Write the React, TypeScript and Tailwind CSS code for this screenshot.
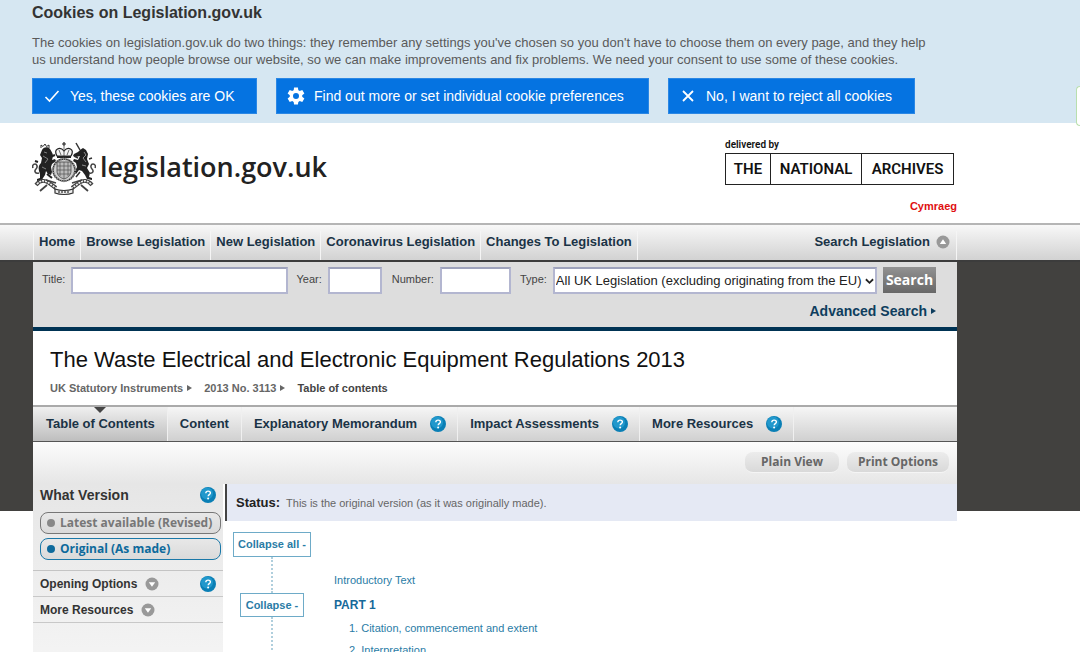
import React from 'react';

const NAV_ITEMS = [
  'Home',
  'Browse Legislation',
  'New Legislation',
  'Coronavirus Legislation',
  'Changes To Legislation',
];

const TABS = [
  { label: 'Table of Contents', active: true, help: false },
  { label: 'Content', active: false, help: false },
  { label: 'Explanatory Memorandum', active: false, help: true },
  { label: 'Impact Assessments', active: false, help: true },
  { label: 'More Resources', active: false, help: true },
];

const PROVISIONS = ['1. Citation, commencement and extent', '2. Interpretation'];

const HelpIcon = ({ topic }: { topic: string }) => (
  <button type="button" aria-label={`Help about ${topic}`} className="shrink-0">
    <svg width="16" height="16" viewBox="0 0 16 16" fill="none">
      <circle cx="8" cy="8" r="8" fill="#0a7fb5" />
      <circle cx="7" cy="6.5" r="6" fill="#2ba3d6" opacity="0.7" />
      <path d="M5.8 6.2c.1-1.4 1-2.1 2.3-2.1 1.300 0 2.300.7 2.300 1.900 0 1.600-2.200 1.700-2.200 3.300" stroke="#fff" strokeWidth="1.400" />
      <circle cx="8.100" cy="11.600" r="1" fill="#fff" />
    </svg>
  </button>
);

const RoundArrow = ({ up }: { up?: boolean }) => (
  <svg width="14" height="14" viewBox="0 0 14 14" className="shrink-0">
    <circle cx="7" cy="7" r="6.5" fill="#999" />
    <path d={up ? 'M3.800 9 7 4.200 10.200 9Z' : 'M3.800 5.200h6.400L7 9.800Z'} fill="#fff" />
  </svg>
);

const SmallArrow = () => (
  <svg width="5" height="6" viewBox="0 0 5 6" className="shrink-0" fill="currentColor">
    <path d="M0 0 5 3 0 6Z" />
  </svg>
);

const Lion = () => (
  <g>
    <path
      d="M10 8c1-3 6-4 8-1 1 2 3 4 3 7l-1 4 3-1 1 2-4 3-1 3 1 5-1 3-3-1-2-3-1 4-2 3-1 2-5 1v-2l3-1v-4l-1-3c-1-4 0-6 2-8l1-5-2-3Z"
      fill="#222"
    />
    <path d="M9 6V3l2 1.500L13 2l1.500 2.500L17 3v3" stroke="#333" strokeWidth="1" fill="none" />
    <path d="M18 15l5-2M6 20l-3-1M15 32l5 4" stroke="#222" strokeWidth="2" fill="none" />
    <path d="M7 31c-4 1-5-2-3-4s1-5-1-5-3 2-2 4" stroke="#444" strokeWidth="1.600" fill="none" />
    <path d="m12 10 3 1M11 14l5 3-3 4M10 25l4 2" stroke="#999" strokeWidth=".8" fill="none" />
  </g>
);

const Unicorn = () => (
  <g>
    <path
      d="M48 8l3-2 3 2 2 4-1 5 2 5-2 4 3 5-1 4 3 1v2l-5-1-2-4-3-4-3-1-3 4-2-1 3-6-1-4-3-2 1-2 4 1 2-4-4 1-3-1 1-2 4-2Z"
      fill="#222"
    />
    <path d="m48 8-4-7M46 16l-4-2M57 17l3-1M48 30l-4 5" stroke="#333" strokeWidth="1.500" fill="none" />
    <path d="M57 31c4 1 5-2 3-4s-1-5 1-5 3 2 2 4" stroke="#444" strokeWidth="1.500" fill="none" />
    <path d="m52 10 2 3-3 3 3 4M50 23l4 1" stroke="#aaa" strokeWidth=".8" fill="none" />
  </g>
);

const Crest = () => (
  <svg width="64" height="54" viewBox="0 0 64 54" fill="none" aria-hidden="true">
    <Lion />
    <Unicorn />
    <path d="M32 0v4M30 2h4" stroke="#222" strokeWidth="1.200" />
    <path d="M25 14c-4-7 3-10 7-5 4-5 11-2 7 5Z" fill="#f4f4f4" stroke="#222" strokeWidth="1.200" />
    <path d="M32 4v10M27 8l2 5M37 8l-2 5" stroke="#444" strokeWidth=".8" />
    <path d="M25 15h14" stroke="#222" strokeWidth="2" />
    <circle cx="32" cy="28" r="11" fill="#d0d0d0" stroke="#333" strokeWidth="1.400" />
    <circle cx="32" cy="28" r="11" stroke="#999" strokeWidth="2.500" strokeDasharray="1 1.400" />
    <path d="M25 20h14v9c0 5-4 7-7 8-3-1-7-3-7-8Z" fill="#bbb" stroke="#444" strokeWidth=".8" />
    <path d="M32 20v17M25 28h14M28 20v14M36 20v14M25 24h14M26 32h12" stroke="#555" strokeWidth=".7" />
    <path d="M4 43c4-5 9-5 13-2l7 5M60 43c-4-5-9-5-13-2l-7 5" stroke="#444" strokeWidth="4" />
    <path d="M5 42c4-4 8-4 12-1l7 5M59 42c-4-4-8-4-12-1l-7 5" stroke="#eee" strokeWidth="1.800" strokeDasharray="2 1" />
    <path d="M8 49l7-6M56 49l-7-6M14 38l10 3M50 38l-10 3" stroke="#444" strokeWidth="1.800" />
    <path d="M23 47c5 2 13 2 18 0v4c-5 2-13 2-18 0Z" fill="#eee" stroke="#333" strokeWidth="1.200" />
    <path d="M26 50h12" stroke="#555" strokeWidth="1.400" strokeDasharray="2 1" />
  </svg>
);

const CheckIcon = () => (
  <svg width="16" height="14" viewBox="0 0 16 14" fill="none" stroke="#fff" strokeWidth="1.600">
    <path d="m1.500 8 4 4L14.500 2" />
  </svg>
);

const GearIcon = () => (
  <svg width="20" height="20" viewBox="0 0 24 24" fill="#fff">
    <path d="M19.430 12.980c.04-.32.07-.64.07-.98s-.03-.66-.07-.98l2.600-1.990-2.500-4.330-3.060 1.230c-.52-.4-1.080-.73-1.690-.98L14.320 1.700H9.680l-.46 3.250c-.61.250-1.170.59-1.690.98L4.470 4.700l-2.500 4.330 2.600 1.990c-.04.32-.07.65-.07.98s.03.66.07.98l-2.600 1.990 2.500 4.330 3.060-1.230c.52.4 1.080.73 1.690.98l.46 3.250h4.640l.46-3.250c.61-.25 1.170-.59 1.690-.98l3.060 1.230 2.500-4.330zM12 15.600a3.600 3.600 0 1 1 0-7.200 3.600 3.600 0 0 1 0 7.200z" />
  </svg>
);

const CrossIcon = () => (
  <svg width="12" height="12" viewBox="0 0 12 12" stroke="#fff" strokeWidth="1.800">
    <path d="m1 1 10 10M11 1 1 11" />
  </svg>
);

const CookieBanner = () => {
  const button = 'flex h-9 items-center bg-[#0573e1] border border-[#2b87e4] text-sm text-white';

  return (
    <section className="relative h-[123px] bg-[#d6e7f2] pl-8 pt-1">
      <h2 className="text-base leading-[18px] font-bold text-[#333]">Cookies on Legislation.gov.uk</h2>
      <p className="mt-3 max-w-[904px] text-[13px] leading-[17px] text-[#5a5a5a]">
        The cookies on legislation.gov.uk do two things: they remember any settings you've chosen so you don't have to
        choose them on every page, and they help us understand how people browse our website, so we can make
        improvements and fix problems. We need your consent to use some of these cookies.
      </p>
      <div className="mt-[10px] flex gap-[19px]">
        <button type="button" className={`${button} w-[225px] gap-[10px] pl-[11px]`}>
          <CheckIcon />
          Yes, these cookies are OK
        </button>
        <button type="button" className={`${button} w-[373px] gap-2 pl-[9px]`}>
          <GearIcon />
          Find out more or set individual cookie preferences
        </button>
        <button type="button" className={`${button} w-[247px] gap-3 pl-[13px]`}>
          <CrossIcon />
          No, I want to reject all cookies
        </button>
      </div>
      <div className="absolute top-[86px] right-0 h-10 w-1 rounded-l-md border border-r-0 border-[#b9dfae] bg-white" />
    </section>
  );
};

const SiteHeader = () => (
  <header className="h-[100px] pl-8">
    <div className="flex max-w-[925px] justify-between">
      <a href="#" className="flex items-start gap-1 pt-[19px]">
        <Crest />
        <span className="font-['Open_Sans',sans-serif] text-[27px] leading-[50px] font-semibold text-[#222]">
          legislation.gov.uk
        </span>
      </a>
      <div className="flex flex-col pt-[15px] font-['Roboto',sans-serif] text-[#111]">
        <span className="text-[10px] leading-[14px] font-semibold">delivered by</span>
        <a href="#" className="mt-px mr-[3px] flex h-8 divide-x divide-[#222] border border-[#222] text-center text-[15px] leading-[31px] font-semibold">
          <span className="w-[45px]">THE</span>
          <span className="w-[91px]">NATIONAL</span>
          <span className="w-[91px]">ARCHIVES</span>
        </a>
        <a href="#" className="mt-[13px] text-right font-['Liberation_Sans',sans-serif] text-[11px] leading-4 font-bold text-[#e01010]">
          Cymraeg
        </a>
      </div>
    </div>
  </header>
);

const PrimaryNav = () => (
  <nav className="h-[39px] border-t-2 border-b-2 border-t-[#b5b5b5] border-b-[#3c3c3c] bg-linear-to-b from-[#f8f8f8] to-[#d2d2d2] pl-[33px]">
    <ul className="flex h-full max-w-[924px] pt-[6px] text-[13px] leading-[22px] font-bold text-[#1a3346]">
      {NAV_ITEMS.map((item) => (
        <li key={item} className="border-l border-[#f5f5f5] px-[5px] whitespace-nowrap">
          <a href="#">{item}</a>
        </li>
      ))}
      <li className="grow border-l border-[#f5f5f5]" />
      <li className="border-r border-[#f5f5f5] pr-1.5">
        <a href="#" className="flex items-center gap-1.5">
          Search Legislation
          <RoundArrow up />
        </a>
      </li>
    </ul>
  </nav>
);

const SearchForm = () => {
  const field = 'h-[27px] border-2 border-[#b3b6d0] border-t-[#9ea2bb] bg-white';

  return (
    <form className="h-[69px] border-b-4 border-[#003354] bg-[#ddd] pt-[5px] pr-[21px] pl-[9px] text-[11px] text-[#444]">
      <div className="flex items-start leading-6">
        <label htmlFor="title">Title:</label>
        <input id="title" className={`${field} ml-1.5 w-[217px]`} />
        <label htmlFor="year" className="ml-2">Year:</label>
        <input id="year" className={`${field} ml-1.5 w-[54px]`} />
        <label htmlFor="number" className="ml-[10px]">Number:</label>
        <input id="number" className={`${field} ml-1.5 w-[71px]`} />
        <label htmlFor="type" className="ml-[9px]">Type:</label>
        <div className="relative ml-1.5 grow">
          <select id="type" className={`${field} w-full appearance-none pl-px text-[13px] text-[#222]`}>
            <option>All UK Legislation (excluding originating from the EU)</option>
          </select>
          <svg width="9" height="7" viewBox="0 0 10 7" fill="none" className="pointer-events-none absolute top-[11px] right-[3px]">
            <path d="m1 1 4 4 4-4" stroke="#222" strokeWidth="2" />
          </svg>
        </div>
        <button
          type="submit"
          className="ml-1.5 h-[26px] w-[53px] bg-linear-to-b from-[#929292] to-[#686868] font-['Open_Sans',sans-serif] text-sm leading-[26px] font-bold text-white"
        >
          Search
        </button>
      </div>
      <a href="#" className="mt-2 flex items-center justify-end gap-1 text-sm leading-[18px] font-bold text-[#0e3d5e]">
        Advanced Search
        <SmallArrow />
      </a>
    </form>
  );
};

const TitleBlock = () => (
  <div className="h-[74px] bg-white pt-[15px] pl-[17px]">
    <h1 className="text-[22px] leading-7 text-[#111]">The Waste Electrical and Electronic Equipment Regulations 2013</h1>
    <ol className="mt-[6px] flex text-[11px] leading-4 font-bold text-[#666]">
      <li className="flex items-center gap-1">
        <a href="#">UK Statutory Instruments</a>
        <SmallArrow />
      </li>
      <li className="ml-3 flex items-center gap-1">
        <a href="#">2013 No. 3113</a>
        <SmallArrow />
      </li>
      <li className="ml-3 text-[#444]">Table of contents</li>
    </ol>
  </div>
);

const TabBar = () => (
  <ul className="flex h-[37px] border-t-2 border-b border-t-[#aaa] border-b-[#555] bg-linear-to-b from-[#f6f6f6] to-[#d0d0d0] text-[13px] leading-[34px] font-bold text-[#1a3346]">
    {TABS.map((tab) => (
      <li
        key={tab.label}
        className={`relative flex items-center border-r border-[#f0f0f0] whitespace-nowrap ${
          tab.active ? 'bg-linear-to-b from-[#f0f0f0] to-[#bebebe] pr-3 pl-[13px]' : tab.help ? 'gap-[13px] pr-[11px] pl-3' : 'px-3'
        }`}
      >
        {tab.active && (
          <svg width="12" height="6" viewBox="0 0 12 6" className="absolute top-0 left-1/2 -translate-x-1/2">
            <path d="M0 0h12L6 6Z" fill="#444" />
          </svg>
        )}
        <a href="#">{tab.label}</a>
        {tab.help && <HelpIcon topic={tab.label} />}
      </li>
    ))}
  </ul>
);

const ViewOptions = () => {
  const button =
    "h-[21px] rounded-lg border-b border-[#f5f5f5] bg-linear-to-b from-[#ececec] to-[#d9d9d9] font-['Open_Sans',sans-serif] text-xs leading-5 font-bold text-[#666]";

  return (
    <div className="flex h-[42px] items-center justify-end gap-2 bg-linear-to-b from-[#fcfcfc] to-[#e6e6e6] pr-2 pb-0.5">
      <button type="button" className={`${button} w-[94px]`}>Plain View</button>
      <button type="button" className={`${button} w-[102px]`}>Print Options</button>
    </div>
  );
};

const Sidebar = () => {
  const pill =
    "flex h-[22px] items-center gap-1 rounded-lg border bg-linear-to-b from-[#e8e8e8] to-[#dadada] pl-[5px] font-['Open_Sans',sans-serif] text-xs font-bold";

  return (
    <aside className="w-[190px] shrink-0 bg-linear-to-b from-[#e6e6e6] to-[#f4f4f4] text-xs leading-4 font-bold text-[#333]">
      <section className="border-b border-[#c4c4c4] pt-[3px] pr-0.5 pb-[10px] pl-[7px]">
        <div className="flex items-center justify-between pr-[5px]">
          <h2 className="text-sm leading-4">What Version</h2>
          <HelpIcon topic="What Version" />
        </div>
        <div className="mt-[9px] flex flex-col gap-1">
          <a href="#" className={`${pill} border-[#777] text-[#777]`}>
            <span className="mx-px size-2 rounded-full bg-[#888]" />
            Latest available (Revised)
          </a>
          <a href="#" className={`${pill} border-[#1a78a8] text-[#0e6a9c]`}>
            <span className="mx-px size-2 rounded-full bg-[#0e6a9c]" />
            Original (As made)
          </a>
        </div>
      </section>
      <div className="flex h-[26px] items-center border-b border-[#c8c8c8] px-[7px]">
        <a href="#" className="flex grow items-center gap-2">Opening Options <RoundArrow /></a>
        <HelpIcon topic="Opening Options" />
      </div>
      <div className="flex h-[26px] items-center border-b border-[#c8c8c8] px-[7px]">
        <a href="#" className="flex items-center gap-2">More Resources <RoundArrow /></a>
      </div>
    </aside>
  );
};

const Connector = () => <span className="mx-auto border-l-2 border-dotted border-[#b0cfdd]" />;

const Contents = () => {
  const toggle = 'border border-[#6eabc8] bg-white text-center text-[11px] font-bold text-[#2a7ca6]';

  return (
    <main className="min-w-0 grow bg-white pl-0.5">
      <p className="h-[37px] border-l-2 border-[#444] bg-[#e5e9f4] pl-[9px] text-[11px] leading-[37px] text-[#666]">
        <strong className="mr-1.5 text-[13px] text-[#222]">Status:</strong>
        This is the original version (as it was originally made).
      </p>
      <div className="grid grid-cols-[78px_1fr] gap-x-[23px] pt-[11px] pl-2 text-[11px] text-[#2a7ca6]">
        <button type="button" className={`${toggle} h-[25px]`}>Collapse all -</button>
        <span />
        <div className="flex h-9"><Connector /></div>
        <a href="#" className="pt-[15px] leading-4">Introductory Text</a>
        <button type="button" className={`${toggle} mx-auto h-6 w-16`}>Collapse -</button>
        <a href="#" className="text-xs leading-6 font-bold text-[#16699a]">PART 1</a>
        <div className="flex"><Connector /></div>
        <ol className="pl-[15px] leading-[22px]">
          {PROVISIONS.map((provision) => (
            <li key={provision}>
              <a href="#">{provision}</a>
            </li>
          ))}
        </ol>
      </div>
    </main>
  );
};

export default function App() {
  return (
    <div className="h-screen overflow-hidden bg-white font-['Liberation_Sans',sans-serif]">
      <CookieBanner />
      <SiteHeader />
      <PrimaryNav />
      <div className="bg-[linear-gradient(#42413f,#42413f)] bg-[length:100%_249px] bg-no-repeat pl-[33px]">
        <div className="max-w-[924px]">
          <SearchForm />
          <TitleBlock />
          <TabBar />
          <ViewOptions />
          <div className="flex min-h-[168px]">
            <Sidebar />
            <Contents />
          </div>
        </div>
      </div>
    </div>
  );
}
